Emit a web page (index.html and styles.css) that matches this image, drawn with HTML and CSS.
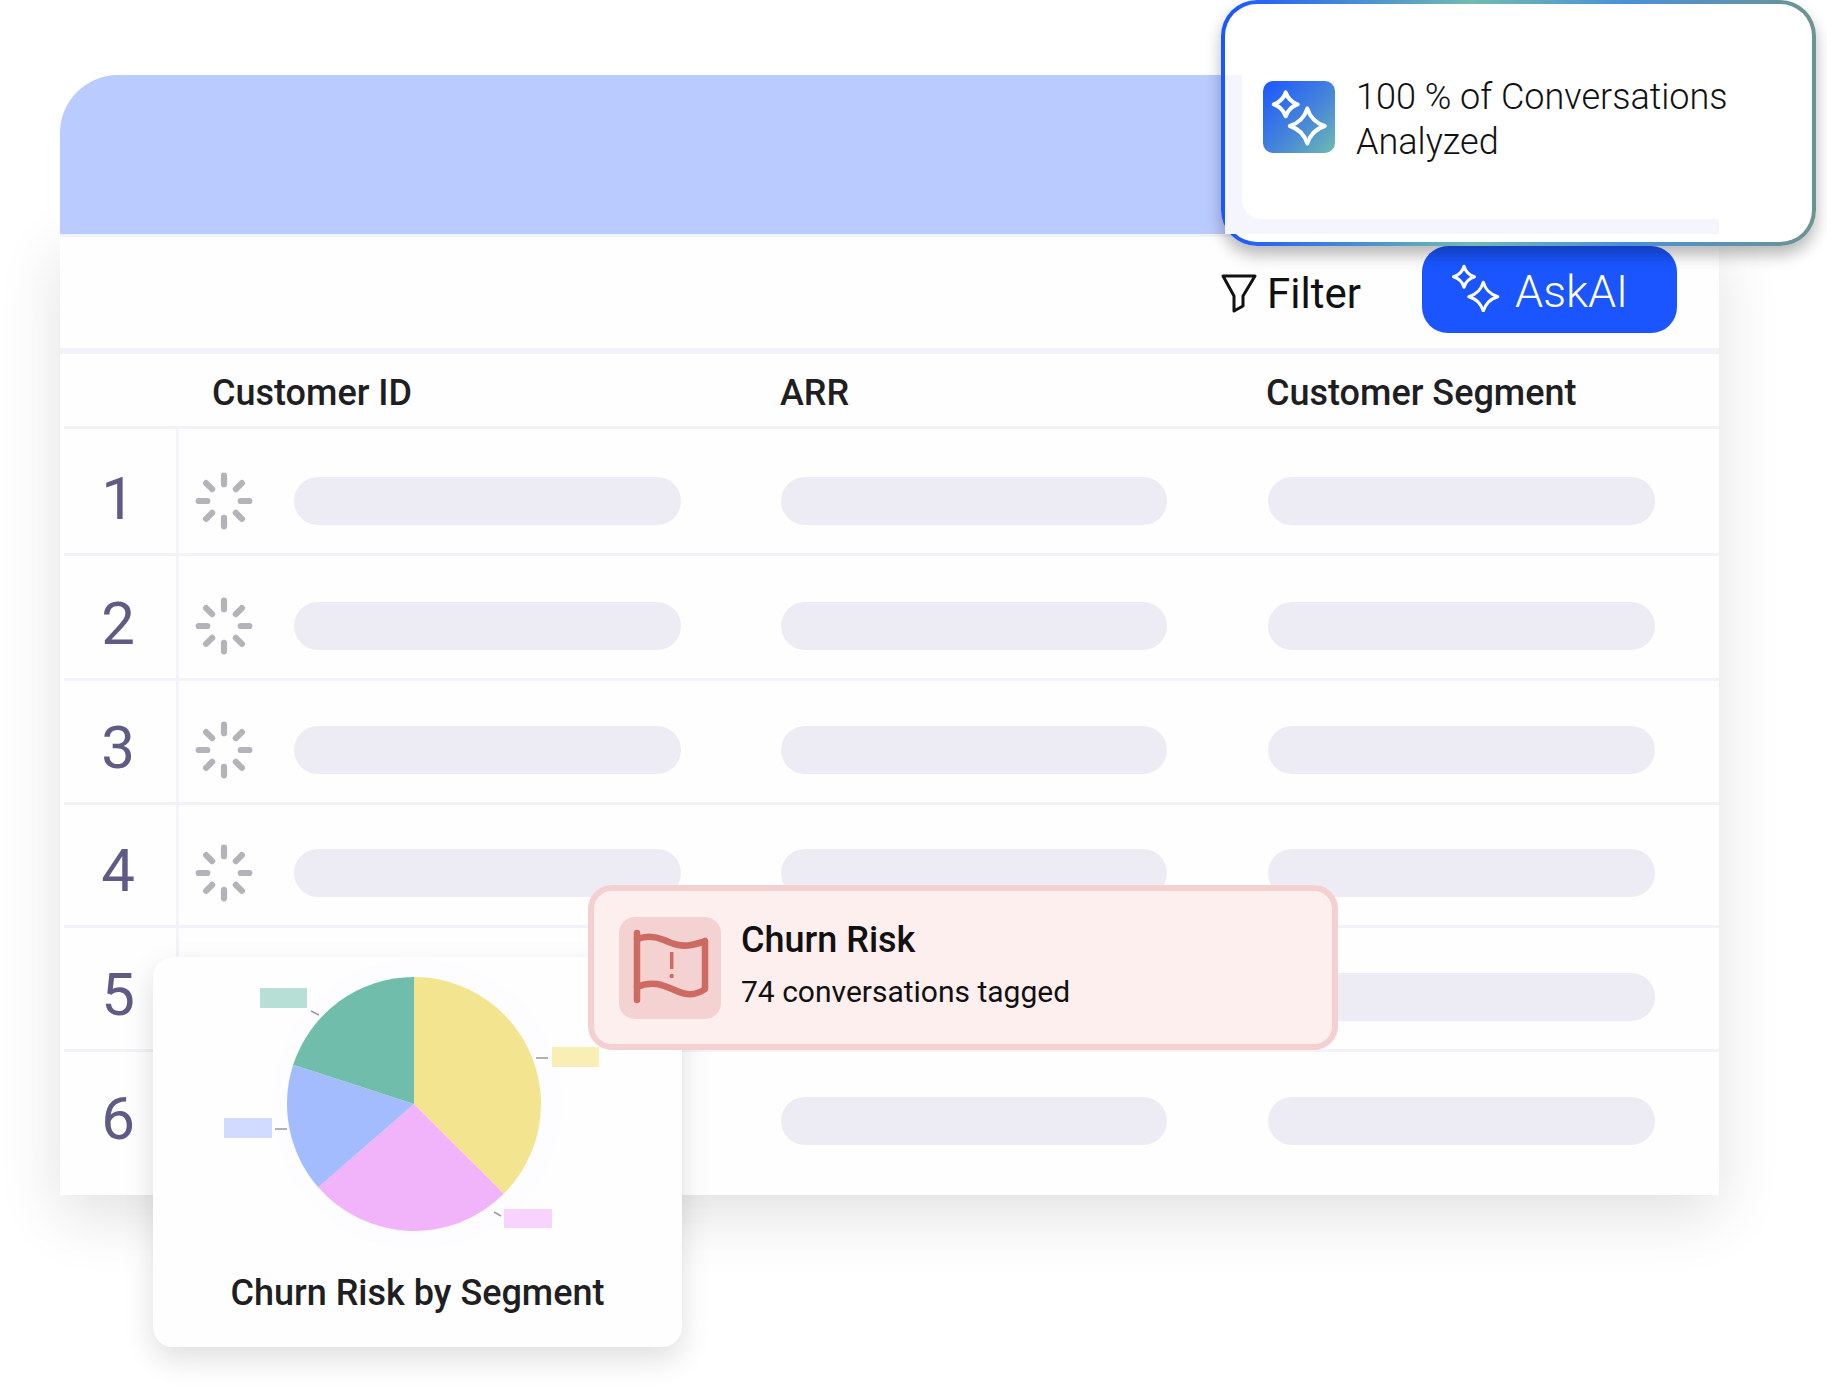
FILE: index.html
```html
<!DOCTYPE html>
<html lang="en">
<head>
<meta charset="utf-8">
<title>Churn Risk</title>
<link rel="stylesheet" href="styles.css">
</head>
<body>
<svg class="defs" width="0" height="0" aria-hidden="true">
  <symbol id="spin" viewBox="0 0 60 60">
    <g stroke="#b5b3ba" stroke-width="6" stroke-linecap="round">
      <path d="M30 5.5V13.8"/><path d="M30 46.2V54.5"/><path d="M5.5 30H13.8"/><path d="M46.2 30H54.5"/>
      <path d="M12.7 12.7L18.5 18.5"/><path d="M41.5 41.5L47.3 47.3"/><path d="M47.3 12.7L41.5 18.5"/><path d="M18.5 41.5L12.7 47.3"/>
    </g>
  </symbol>
</svg>
<div class="stage">
  <main class="card">
    <div class="card-top"></div>
    <section class="table">
      <div class="toolbar">
        <div class="filter">
          <svg class="filter-icon" viewBox="0 0 38 41" width="38" height="41"><path d="M3 3H35L23 23V33L14 38V23Z"/></svg>
          <span>Filter</span>
        </div>
        <button class="ask">
          <svg class="ask-icon" viewBox="0 0 50 50" width="50" height="50"><path d="M14 4.2Q16.4 12.3 24.5 14.7Q16.4 17.1 14 25.2Q11.6 17.1 3.5 14.7Q11.6 12.3 14 4.2Z"/><path d="M33.3 20.2Q36.5 31.5 47.8 34.7Q36.5 37.9 33.3 49.2Q30.1 37.9 18.8 34.7Q30.1 31.5 33.3 20.2Z"/></svg>
          <span>AskAI</span>
        </button>
      </div>
      <div class="head-row">
        <span class="head-id">Customer ID</span>
        <span class="head-arr">ARR</span>
        <span class="head-seg">Customer Segment</span>
      </div>
      <div class="row"><span class="num">1</span><svg class="spinner"><use href="#spin"/></svg><i class="pill"></i><i class="pill pill-b"></i><i class="pill pill-c"></i></div>
      <div class="row"><span class="num">2</span><svg class="spinner"><use href="#spin"/></svg><i class="pill"></i><i class="pill pill-b"></i><i class="pill pill-c"></i></div>
      <div class="row"><span class="num">3</span><svg class="spinner"><use href="#spin"/></svg><i class="pill"></i><i class="pill pill-b"></i><i class="pill pill-c"></i></div>
      <div class="row"><span class="num">4</span><svg class="spinner"><use href="#spin"/></svg><i class="pill"></i><i class="pill pill-b"></i><i class="pill pill-c"></i></div>
      <div class="row"><span class="num">5</span><svg class="spinner"><use href="#spin"/></svg><i class="pill"></i><i class="pill pill-b"></i><i class="pill pill-c"></i></div>
      <div class="row"><span class="num">6</span><svg class="spinner"><use href="#spin"/></svg><i class="pill"></i><i class="pill pill-b"></i><i class="pill pill-c"></i></div>
    </section>
  </main>

  <aside class="pie-card">
    <svg class="pie" viewBox="0 0 529 300" width="529" height="300">
      <circle cx="264" cy="149" r="145" fill="#fdfcff"/>
      <path fill="#f3e48f" d="M261 149V22A127 127 0 0 1 350.8 238.8Z"/>
      <path fill="#f1b4fb" d="M261 149L350.8 238.8A127 127 0 0 1 165.2 232.3Z"/>
      <path fill="#a3bcfd" d="M261 149L165.2 232.3A127 127 0 0 1 140.2 109.8Z"/>
      <path fill="#70bdac" d="M261 149L140.2 109.8A127 127 0 0 1 261 22Z"/>
      <rect x="107" y="33" width="47" height="20" fill="#b8dfd6"/>
      <rect x="399" y="92" width="47" height="20" fill="#f9eeb3"/>
      <rect x="71" y="163" width="48" height="20" fill="#d1dbff"/>
      <rect x="351" y="254" width="48" height="19" fill="#f8d3fd"/>
      <g stroke="#9a9a9a" stroke-width="1.5">
        <path d="M158 56L166 60"/><path d="M383 103H395"/><path d="M122 174H134"/><path d="M341 257L348 261"/>
      </g>
    </svg>
    <h3 class="pie-title">Churn Risk by Segment</h3>
  </aside>

  <aside class="churn">
    <div class="churn-tile">
      <svg viewBox="0 0 102 102" width="102" height="102">
        <path class="flag" d="M18 16V83"/>
        <path class="flag" d="M18 22C26 19 36 19 45 23S62 30 72 28Q82 26 86 24V72Q78 78 68 77C58 76 50 69 38 67C30 66 24 67 18 70"/>
        <path class="mark" d="M52.7 35V52"/>
        <circle class="dot" cx="52.7" cy="59" r="2.2"/>
      </svg>
    </div>
    <div class="churn-text">
      <strong>Churn Risk</strong>
      <span>74 conversations tagged</span>
    </div>
  </aside>

  <aside class="ai-pop">
    <div class="ai-ghost"></div>
    <div class="ai-tile">
      <svg viewBox="0 0 72 72" width="72" height="72"><path d="M22.7 11.3Q25.7 20.3 34.7 23.3Q25.7 26.3 22.7 35.3Q19.7 26.3 10.7 23.3Q19.7 20.3 22.7 11.3Z"/><path d="M44.3 27.5Q48.5 40.8 61.8 45Q48.5 49.2 44.3 62.5Q40.1 49.2 26.8 45Q40.1 40.8 44.3 27.5Z"/></svg>
    </div>
    <p class="ai-text">100 % of Conversations<br>Analyzed</p>
  </aside>
</div>
</body>
</html>
```
FILE: styles.css
```css
* { box-sizing: border-box; }
html, body { margin: 0; padding: 0; background: #fff; }
body { font-family: Roboto, "Liberation Sans", sans-serif; overflow: hidden; }
.defs { position: absolute; }
.stage { position: relative; width: 1827px; height: 1389px; padding: 75px 0 0 60px; overflow: hidden; }

.card { width: 1659px; height: 1120px; display: flex; flex-direction: column; }
.card-top { position: relative; z-index: 1; height: 159px; background: #bacbff; border-radius: 58px 58px 0 0; }
.table { flex: 1; display: flex; flex-direction: column; background: #fefefe; border-top: 3px solid #f2f2fb; box-shadow: 0 20px 60px rgba(0, 0, 0, .12); }

.toolbar { height: 117px; display: flex; justify-content: flex-end; align-items: flex-start; gap: 61px; padding: 9px 42px 0 0; border-bottom: 6px solid #f3f2f8; }
.filter { display: flex; align-items: center; gap: 9px; height: 87px; padding-top: 7px; font-size: 42px; color: #111; }
.filter-icon { fill: none; stroke: #111; stroke-width: 3; stroke-linejoin: round; }
.ask { width: 255px; height: 87px; display: flex; align-items: center; gap: 15px; padding: 0 0 0 28px; border: 0; border-radius: 26px; background: #1a55ff; color: #fff; font: 300 45px Roboto, sans-serif; }
.ask span { margin-top: 3px; }
.ask-icon { fill: none; stroke: #fff; stroke-width: 3; stroke-linejoin: round; margin-top: -5px; }

.head-row, .row { display: grid; grid-template-columns: 115px 115px 387px 100px 386px 101px 387px; margin-left: 4px; border-bottom: 3px solid #f3f2f8; }
.head-row { height: 75px; padding-top: 6px; align-items: center; font-size: 36px; font-weight: 500; color: #1f1f23; }
.head-id { grid-column: 2 / 4; padding-left: 33px; }
.head-arr { grid-column: 5; margin-left: -1px; }
.head-seg { grid-column: 7; margin-left: -2px; white-space: nowrap; }

.row { height: 124px; padding-top: 45px; grid-template-rows: 48px; align-items: center; background: linear-gradient(#f3f2fd, #f3f2fd) 112px 0 / 3px 100% no-repeat; }
.head-row + .row { height: 127px; padding-top: 48px; }
.row:nth-child(4) { height: 125px; padding-top: 46px; }
.row:nth-child(6) { height: 123px; padding-top: 44px; }
.row:last-child { flex: 1; border-bottom: 0; }
.num { align-self: start; padding-right: 7px; text-align: center; font-size: 60px; line-height: 43px; color: #5f5b85; }
.spinner { width: 62px; height: 62px; margin-left: 14px; }
.pill { display: block; height: 48px; border-radius: 24px; background: #edecf5; }
.pill-b { grid-column: 5; }
.pill-c { grid-column: 7; }

.ai-pop { position: absolute; z-index: 4; left: 1221px; top: 0; width: 595px; height: 246px; display: flex; align-items: center; gap: 21px; padding: 0 0 12px 38px; border: 4px solid transparent; border-radius: 36px; background: linear-gradient(#fff, #fff) padding-box, linear-gradient(90deg, #1a55ff 0%, #6fbcb0 42%, #4a90d9 68%, #6d9490 100%) border-box; box-shadow: 0 9px 16px rgba(0, 0, 0, .28); }
.ai-ghost { position: absolute; left: 0; top: 71px; width: 494px; height: 159px; background: #f5f5fe; }
.ai-ghost::after { content: ""; position: absolute; inset: 0 0 15px 17px; background: #fff; border-radius: 0 0 0 20px; }
.ai-tile { position: relative; width: 72px; height: 72px; border-radius: 10px; background: linear-gradient(135deg, #1a55ff 0%, #4a8ad6 60%, #6fbcb0 100%); }
.ai-tile svg { display: block; fill: none; stroke: #fff; stroke-width: 4; stroke-linejoin: round; }
.ai-text { position: relative; margin: 5px 0 0; font-size: 36px; font-weight: 300; line-height: 45px; color: #111; white-space: nowrap; }

.churn { position: absolute; z-index: 3; left: 588px; top: 885px; width: 750px; height: 165px; display: flex; align-items: center; gap: 20px; padding-left: 25px; background: #feefef; border: 6px solid #f5d0d0; border-radius: 24px; }
.churn-tile { width: 102px; height: 102px; border-radius: 16px; background: #f5d2d2; }
.churn-tile svg { display: block; }
.flag { fill: none; stroke: #cd6b63; stroke-width: 6.5; stroke-linecap: round; stroke-linejoin: round; }
.mark { fill: none; stroke: #cd6b63; stroke-width: 3.5; }
.dot { fill: #cd6b63; }
.churn-text { display: flex; flex-direction: column; gap: 13px; margin-top: -8px; color: #111; }
.churn-text strong { font-size: 36px; font-weight: 500; line-height: 42px; }
.churn-text span { font-size: 30px; line-height: 35px; }

.pie-card { position: absolute; z-index: 2; left: 153px; top: 957px; width: 529px; height: 390px; background: #fefefe; border-radius: 20px; box-shadow: 0 12px 30px rgba(0, 0, 0, .13); }
.pie { display: block; margin-top: -2px; }
.pie-title { margin: 16px 0 0; text-align: center; font-size: 36px; font-weight: 500; line-height: 44px; color: #1f1f23; }
```
